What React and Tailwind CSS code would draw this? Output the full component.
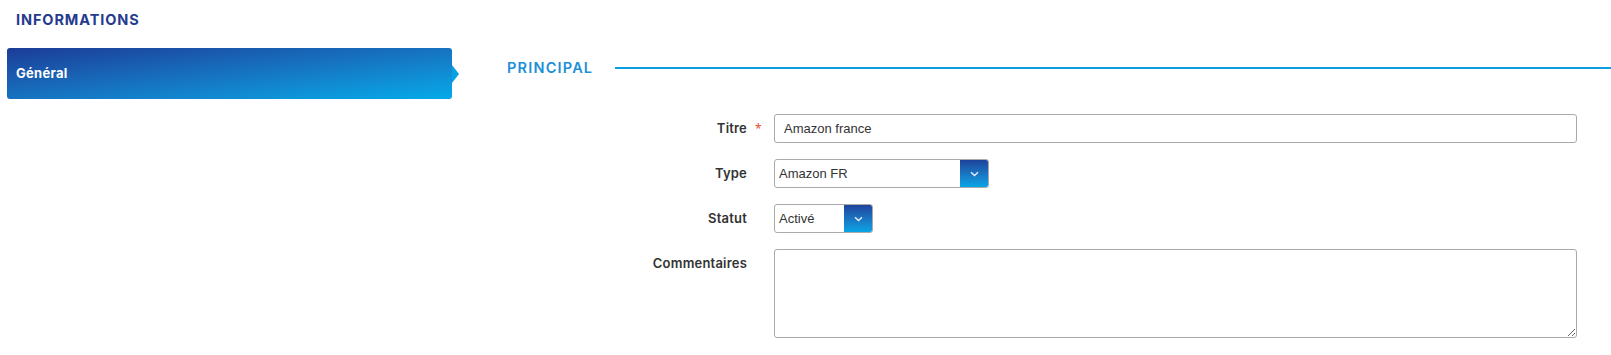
import { useState } from 'react';

const labelFont = { fontFamily: 'Inter, "Noto Sans", sans-serif' };

function Chevron() {
  return (
    <svg width="9" height="6" viewBox="0 0 9 6" fill="none">
      <path d="M1 1.2 L4.5 4.6 L8 1.2" stroke="#e8eefc" strokeWidth="1.4" />
    </svg>
  );
}

function SelectBox({ value, width }) {
  return (
    <div className={`flex h-[29px] ${width} rounded-[3px] border border-[#aaaaaa] bg-white overflow-hidden`}>
      <div className="flex-1 flex items-center pl-[4px] text-[13px] text-[#333] font-['Liberation_Sans',Arial,sans-serif]">
        {value}
      </div>
      <div className="w-[29px] -my-px -mr-px rounded-r-[3px] bg-gradient-to-b from-[#1e3f99] to-[#04a9e8] flex items-center justify-center">
        <Chevron />
      </div>
    </div>
  );
}

function Row({ label, required, children, top }) {
  return (
    <div className={`flex ${top ? 'items-start' : 'items-center'}`}>
      <div
        className={`w-[277px] text-right text-[13px] font-semibold text-[#333] tracking-[0.2px] ${top ? 'pt-[5px]' : ''}`}
        style={labelFont}
      >
        {label}
      </div>
      <div className="w-[27px] pl-[8px] text-[#e8492f] text-[12px]">{required ? '*' : ''}</div>
      <div className="flex-1 mr-[34px]">{children}</div>
    </div>
  );
}

export default function App() {
  const [title, setTitle] = useState('Amazon france');

  return (
    <div className="w-[1611px] h-[355px] bg-white relative overflow-hidden">
      {/* Header */}
      <div className="pl-[16px] pt-[9px] h-[48px]">
        <h1 className="text-[14.5px] font-bold tracking-[0.9px] text-[#253b8e]" style={labelFont}>
          INFORMATIONS
        </h1>
      </div>

      <div className="flex">
        {/* Sidebar */}
        <div className="pl-[7px] w-[470px] shrink-0">
          <div className="relative w-[445px] h-[51px] rounded-[3px] bg-gradient-to-br from-[#1b3c98] to-[#03aae9] flex items-center pl-[9px]">
            <span className="text-white text-[13px] font-bold tracking-[0.3px]" style={labelFont}>Général</span>
            <div className="absolute right-[-7px] top-[17px] w-0 h-0 border-y-[9px] border-y-transparent border-l-[7px] border-l-[#07a0e2]" />
          </div>
        </div>

        {/* Main */}
        <div className="flex-1">
          <div className="flex items-center h-[40px] pl-[37px]">
            <span className="text-[14.5px] font-semibold tracking-[1.2px] text-[#1c90d8]" style={labelFont}>
              PRINCIPAL
            </span>
            <div className="flex-1 ml-[22px] h-[1.5px] bg-[#0a9fe0]" />
          </div>

          <div className="mt-[26px] flex flex-col gap-[16px]">
            <Row label="Titre" required>
              <input
                value={title}
                onChange={(e) => setTitle(e.target.value)}
                className="w-full h-[29px] rounded-[3px] border border-[#aaaaaa] px-[9px] text-[13px] text-[#333] outline-none font-['Liberation_Sans',Arial,sans-serif]"
              />
            </Row>
            <Row label="Type">
              <SelectBox value="Amazon FR" width="w-[215px]" />
            </Row>
            <Row label="Statut">
              <SelectBox value="Activé" width="w-[99px]" />
            </Row>
            <Row label="Commentaires" top>
              <textarea className="block w-full h-[89px] rounded-[3px] border border-[#aaaaaa] px-[9px] py-[5px] text-[13px] outline-none" />
            </Row>
          </div>
        </div>
      </div>
    </div>
  );
}
